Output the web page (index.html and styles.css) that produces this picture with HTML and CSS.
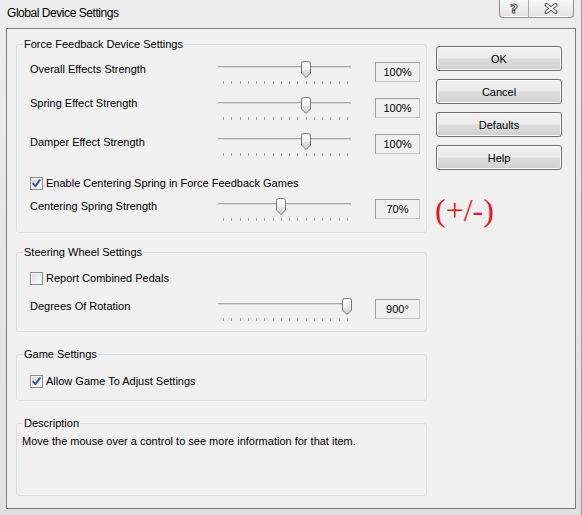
FILE: index.html
```html
<!DOCTYPE html>
<html>
<head>
<meta charset="utf-8">
<title>Global Device Settings</title>
<link rel="stylesheet" href="styles.css">
</head>
<body>
<div class="window">
  <div class="titlebar">
    <span class="title">Global Device Settings</span>
    <div class="caption">
      <div class="cap cap-help"><span class="qmark">?</span></div>
      <div class="cap cap-close">
        <svg width="14" height="11" viewBox="0 0 14 11">
          <path d="M2.5,2 L11.5,9 M11.5,2 L2.5,9" stroke="#5a5a5a" stroke-width="4" stroke-linecap="round"/>
          <path d="M2.5,2 L11.5,9 M11.5,2 L2.5,9" stroke="#fafafa" stroke-width="2" stroke-linecap="round"/>
        </svg>
      </div>
    </div>
  </div>

  <div class="client">
    <div class="groups">
      <section class="group g-ff">
        <div class="group-title">Force Feedback Device Settings</div>
        <div class="srow">
          <span class="slabel">Overall Effects Strength</span>
          <div class="slider"><div class="track"></div><div class="ticks"><i></i><i></i><i></i><i></i><i></i><i></i><i></i><i></i><i></i><i></i><i></i><i></i><i></i><i></i><i></i><i></i></div><svg class="thumb" style="left:83px" width="10" height="18" viewBox="0 0 10 18"><defs><linearGradient id="tg1" x1="0" y1="0" x2="0" y2="1"><stop offset="0" stop-color="#ffffff"/><stop offset="0.5" stop-color="#f2f2f2"/><stop offset="0.55" stop-color="#e2e2e2"/><stop offset="1" stop-color="#d6d6d6"/></linearGradient></defs><path d="M0.5,2.5 Q0.5,0.5 2.5,0.5 H7.5 Q9.5,0.5 9.5,2.5 V12 L5,16.5 L0.5,12 Z" fill="url(#tg1)" stroke="#777"/></svg></div>
          <div class="value">100%</div>
        </div>
        <div class="srow srow-2">
          <span class="slabel">Spring Effect Strength</span>
          <div class="slider"><div class="track"></div><div class="ticks"><i></i><i></i><i></i><i></i><i></i><i></i><i></i><i></i><i></i><i></i><i></i><i></i><i></i><i></i><i></i><i></i></div><svg class="thumb" style="left:83px" width="10" height="18" viewBox="0 0 10 18"><path d="M0.5,2.5 Q0.5,0.5 2.5,0.5 H7.5 Q9.5,0.5 9.5,2.5 V12 L5,16.5 L0.5,12 Z" fill="url(#tg1)" stroke="#777"/></svg></div>
          <div class="value">100%</div>
        </div>
        <div class="srow srow-3">
          <span class="slabel">Damper Effect Strength</span>
          <div class="slider"><div class="track"></div><div class="ticks"><i></i><i></i><i></i><i></i><i></i><i></i><i></i><i></i><i></i><i></i><i></i><i></i><i></i><i></i><i></i><i></i></div><svg class="thumb" style="left:83px" width="10" height="18" viewBox="0 0 10 18"><path d="M0.5,2.5 Q0.5,0.5 2.5,0.5 H7.5 Q9.5,0.5 9.5,2.5 V12 L5,16.5 L0.5,12 Z" fill="url(#tg1)" stroke="#777"/></svg></div>
          <div class="value">100%</div>
        </div>
        <label class="crow crow-enable">
          <span class="check"><svg width="11" height="11" viewBox="0 0 11 11"><path d="M2.2,5.6 L4.4,8.2 L8.8,2.2" fill="none" stroke="#3d5a96" stroke-width="2" stroke-linecap="round" stroke-linejoin="round"/></svg></span>
          <span>Enable Centering Spring in Force Feedback Games</span>
        </label>
        <div class="srow srow-after-check">
          <span class="slabel">Centering Spring Strength</span>
          <div class="slider"><div class="track"></div><div class="ticks"><i></i><i></i><i></i><i></i><i></i><i></i><i></i><i></i><i></i><i></i><i></i><i></i><i></i><i></i><i></i><i></i></div><svg class="thumb" style="left:58px" width="10" height="18" viewBox="0 0 10 18"><path d="M0.5,2.5 Q0.5,0.5 2.5,0.5 H7.5 Q9.5,0.5 9.5,2.5 V12 L5,16.5 L0.5,12 Z" fill="url(#tg1)" stroke="#777"/></svg></div>
          <div class="value">70%</div>
        </div>
      </section>

      <section class="group g-wheel">
        <div class="group-title">Steering Wheel Settings</div>
        <label class="crow">
          <span class="check"></span>
          <span>Report Combined Pedals</span>
        </label>
        <div class="srow srow-wheel">
          <span class="slabel">Degrees Of Rotation</span>
          <div class="slider"><div class="track"></div><div class="ticks"><i></i><i></i><i></i><i></i><i></i><i></i><i></i><i></i><i></i><i></i><i></i><i></i><i></i><i></i><i></i><i></i></div><svg class="thumb" style="left:124px" width="10" height="18" viewBox="0 0 10 18"><path d="M0.5,2.5 Q0.5,0.5 2.5,0.5 H7.5 Q9.5,0.5 9.5,2.5 V12 L5,16.5 L0.5,12 Z" fill="url(#tg1)" stroke="#777"/></svg></div>
          <div class="value">900°</div>
        </div>
      </section>

      <section class="group g-game">
        <div class="group-title">Game Settings</div>
        <label class="crow">
          <span class="check"><svg width="11" height="11" viewBox="0 0 11 11"><path d="M2.2,5.6 L4.4,8.2 L8.8,2.2" fill="none" stroke="#3d5a96" stroke-width="2" stroke-linecap="round" stroke-linejoin="round"/></svg></span>
          <span>Allow Game To Adjust Settings</span>
        </label>
      </section>

      <section class="group g-desc">
        <div class="group-title">Description</div>
        <p class="desc">Move the mouse over a control to see more information for that item.</p>
      </section>
    </div>

    <div class="side">
      <button class="btn">OK</button>
      <button class="btn">Cancel</button>
      <button class="btn">Defaults</button>
      <button class="btn">Help</button>
      <div class="annot">(+/-)</div>
    </div>
  </div>
</div>
</body>
</html>
```

FILE: styles.css
```css
html, body {
  margin: 0;
  padding: 0;
  background: #e8e8e8;
}

body {
  font-family: "Liberation Sans", Arial, sans-serif;
  font-size: 11px;
  color: #000;
}

.window {
  width: 582px;
  height: 515px;
  box-sizing: border-box;
  display: flex;
  flex-direction: column;
  background: linear-gradient(180deg, #ededed 0%, #e6e6e6 50%, #e0e0e0 100%);
  border-right: 1px solid #9a9a9a;
}

/* title bar */
.titlebar {
  height: 28px;
  flex: 0 0 28px;
  display: flex;
  align-items: flex-start;
}

.title {
  flex: 1;
  padding-left: 7px;
  line-height: 27px;
  font-size: 12px;
  letter-spacing: -0.45px;
}

.caption {
  display: flex;
  width: 75px;
  height: 18px;
  box-sizing: border-box;
  margin-right: 7px;
  border: 1px solid #8f8f8f;
  border-top: none;
  border-radius: 0 0 4px 4px;
  background: linear-gradient(180deg, #f8f8f8 0%, #ececec 55%, #e2e2e2 100%);
  box-shadow: inset 0 -1px 0 #fdfdfd;
}

.cap {
  display: flex;
  align-items: center;
  justify-content: center;
}

.cap-help {
  width: 28px;
  border-right: 1px solid #a9a9a9;
}

.cap-close {
  flex: 1;
}

.qmark {
  font-family: "DejaVu Sans", sans-serif;
  font-weight: bold;
  font-size: 13px;
  line-height: 14px;
  color: #fafafa;
  -webkit-text-stroke: 1px #555;
}

/* client area */
.client {
  height: 481px;
  flex: 0 0 481px;
  margin: 0 5px 0 6px;
  box-sizing: border-box;
  border: 1px solid #7d7d7d;
  background: #f0f0f0;
  display: flex;
}

.groups {
  width: 411px;
  padding-left: 9px;
  padding-top: 15px;
}

.group {
  position: relative;
  box-sizing: border-box;
  width: 411px;
  border: 1px solid #d5dfe5;
  border-radius: 3px;
}

.group-title {
  position: absolute;
  top: -7px;
  left: 6px;
  padding: 0 1px;
  line-height: 13px;
  background: #f0f0f0;
}

.g-ff {
  height: 189px;
  padding: 16px 0 0 13px;
}

.g-wheel {
  margin-top: 19px;
  height: 80px;
  padding: 19px 0 0 13px;
}

.g-game {
  margin-top: 22px;
  height: 47px;
  padding: 20px 0 0 13px;
}

.g-desc {
  margin-top: 22px;
  height: 73px;
  padding: 11px 0 0 5px;
}

.desc {
  margin: 0;
  line-height: 13px;
}

/* slider rows */
.srow {
  display: grid;
  grid-template-columns: 188px 157px 45px;
  height: 24px;
  margin-bottom: 12px;
  align-items: start;
}

.srow-after-check {
  margin-top: 8px;
  margin-bottom: 0;
}

.srow-wheel {
  margin-top: 13px;
  margin-bottom: 0;
}

.slabel {
  margin-top: 2px;
  line-height: 13px;
  white-space: nowrap;
}

.srow-2 .slabel {
  margin-top: 0;
}

.srow-3 .slabel {
  margin-top: 3px;
}

.srow-after-check .slabel,
.srow-wheel .slabel {
  margin-top: 2px;
}

.slider {
  position: relative;
  width: 133px;
  height: 24px;
}

.track {
  margin-top: 5px;
  height: 0;
  border-top: 1px solid #a9a9a9;
  border-bottom: 1px solid #dadada;
}

.ticks {
  margin: 13px 0 0 5px;
  width: 125px;
  height: 3px;
  display: flex;
  justify-content: space-between;
}

.ticks i {
  display: block;
  width: 1px;
  height: 3px;
  background: #a3a3a3;
}

.thumb {
  position: absolute;
  top: 0;
  display: block;
}

.value {
  margin-top: 1px;
  width: 45px;
  height: 20px;
  box-sizing: border-box;
  border: 1px solid;
  border-color: #a0a0a0 #c8c8c8 #c8c8c8 #a0a0a0;
  display: flex;
  align-items: center;
  justify-content: center;
  line-height: 13px;
}

/* checkbox rows */
.crow {
  display: flex;
  align-items: center;
  gap: 3px;
  height: 13px;
  line-height: 13px;
}

.crow-enable {
  margin-top: 20px;
}

.check {
  width: 13px;
  height: 13px;
  box-sizing: border-box;
  border: 1px solid #8e8f8f;
  background: linear-gradient(135deg, #d8dadd 0%, #eef0f2 60%, #fbfbfb 100%);
  box-shadow: inset 0 0 0 1px #f6f6f6;
  display: flex;
  align-items: center;
  justify-content: center;
  flex: 0 0 13px;
}

.check svg {
  display: block;
}

/* right buttons */
.side {
  margin-left: 9px;
  padding-top: 17px;
  width: 126px;
  display: flex;
  flex-direction: column;
  gap: 8px;
}

.btn {
  width: 126px;
  height: 25px;
  box-sizing: border-box;
  border: 1px solid #707070;
  border-radius: 3px;
  background: linear-gradient(180deg, #f2f2f2 0%, #ebebeb 48%, #dddddd 52%, #cfcfcf 100%);
  box-shadow: inset 0 0 0 1px #fbfbfb;
  font-family: "Liberation Sans", Arial, sans-serif;
  font-size: 11px;
  color: #000;
  padding: 0;
}

.annot {
  margin-top: 14px;
  margin-left: -1px;
  font-family: "Liberation Serif", "Times New Roman", serif;
  font-size: 32px;
  line-height: 36px;
  color: #e8161f;
}
```
